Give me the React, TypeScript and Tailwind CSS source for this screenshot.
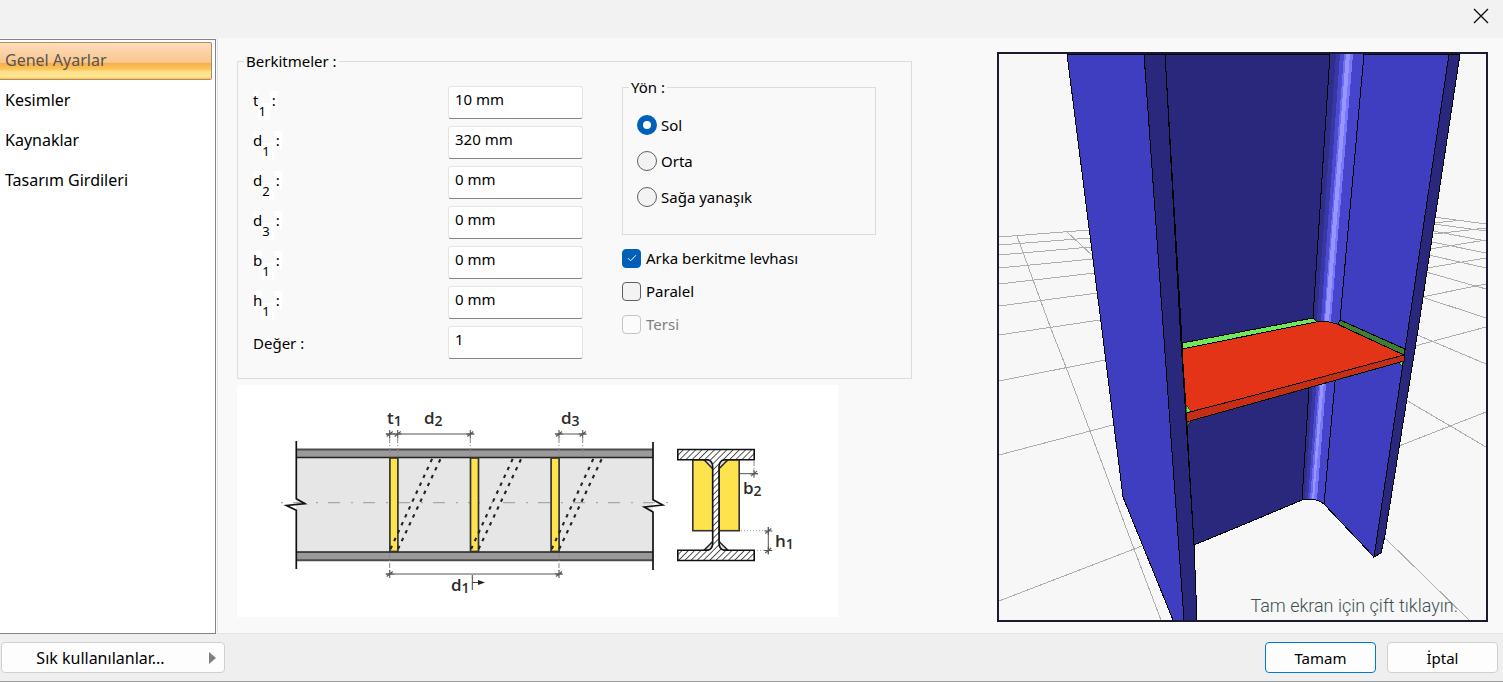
import { useState } from "react";
import type { ReactNode } from "react";

const sections = ["Genel Ayarlar", "Kesimler", "Kaynaklar", "Tasarım Girdileri"];

const fields = [
    { id: "t1", symbol: "t", index: "1", value: "10 mm" },
    { id: "d1", symbol: "d", index: "1", value: "320 mm" },
    { id: "d2", symbol: "d", index: "2", value: "0 mm" },
    { id: "d3", symbol: "d", index: "3", value: "0 mm" },
    { id: "b1", symbol: "b", index: "1", value: "0 mm" },
    { id: "h1", symbol: "h", index: "1", value: "0 mm" },
];

const directions = ["Sol", "Orta", "Sağa yanaşık"];

const inputClass =
    "h-[33px] w-[135px] rounded-[3px] border border-[#e5e5e5] border-b-[#868686] bg-white px-1.5 pb-2 text-[15px] outline-none";

function CheckOption({ label, defaultChecked, disabled }: { label: string; defaultChecked?: boolean; disabled?: boolean }) {
    return (
        <label className={disabled ? "flex items-center gap-[5px] text-[#808080]" : "flex items-center gap-[5px]"}>
            <span className="grid size-[19px] place-items-center">
                <input
                    type="checkbox"
                    defaultChecked={defaultChecked}
                    disabled={disabled}
                    className="peer col-start-1 row-start-1 size-[19px] appearance-none rounded border border-[#5f5f5f] bg-[#f3f3f3] checked:border-[#005fb8] checked:bg-[#005fb8] disabled:border-[#c4c4c4] disabled:bg-[#fbfbfb]"
                />
                <svg viewBox="0 0 10 8" className="pointer-events-none col-start-1 row-start-1 hidden h-2 w-2.5 peer-checked:block">
                    <path d="M1 4.2 3.6 6.8 9 1.2" fill="none" stroke="#fff" />
                </svg>
            </span>
            {label}
        </label>
    );
}

function Tick({ x, y }: { x: number; y: number }) {
    return <path d={`M${x} ${y - 4}v8M${x - 3} ${y + 2.5}l6-5M${x - 4} ${y}h8`} stroke="#555" strokeWidth="1.1" />;
}

function Dim({ x, y, name, index }: { x: number; y: number; name: string; index: string }) {
    return (
        <text x={x} y={y} fontSize="17" fontWeight="600" fill="#2c2c2c">
            {name}
            <tspan fontSize="14" dy="2">{index}</tspan>
        </text>
    );
}

function StiffenerDiagram() {
    return (
        <svg viewBox="237 385 601 232" className="block w-[601px] max-w-full bg-white" fill="none" role="img" aria-label="Berkitme şeması">
            <defs>
                <pattern id="hatch" width="4.4" height="4.4" patternUnits="userSpaceOnUse" patternTransform="rotate(45)">
                    <rect width="4.4" height="4.4" fill="#fff" />
                    <path d="M0 0V4.4" stroke="#444" strokeWidth="1.8" />
                </pattern>
            </defs>

            {/* beam side view */}
            <rect x="296" y="458" width="357" height="94" fill="#e6e6e6" />
            <rect x="296" y="449" width="357" height="9" fill="#9a9a9a" />
            <rect x="296" y="552" width="357" height="9" fill="#9a9a9a" />
            <path d="M296 449.5H653M296 560.3H653" stroke="#4c4c4c" strokeWidth="2" />
            <path d="M296 457.6H653M296 552H653" stroke="#222" strokeWidth="1.5" />
            <path d="M281 502.7H669" stroke="#999" strokeDasharray="2 10 12 11" />
            {[0, 80.6, 161.2].map((dx) => (
                <g key={dx} transform={`translate(${dx} 0)`}>
                    <rect x="389.9" y="458" width="8" height="93.5" fill="#ffe34d" stroke="#333" strokeWidth="1.7" />
                    <path d="M390.5 549 432.5 458M398 549 440.5 459" stroke="#222" strokeWidth="2.1" strokeDasharray="3.5 5.2" />
                </g>
            ))}
            <path d="M296.3 441V498.7L305 503.7 286.5 505.5 296.3 510.3V569" stroke="#111" strokeWidth="1.7" />
            <path d="M653 442V499.7L662.7 505 644.3 507 653 512V570" stroke="#111" strokeWidth="1.7" />

            {/* dimensions */}
            <path d="M386 434H474M555 434H586M386 574H562M739 473.7H758M768.3 527V554" stroke="#555" />
            <path d="M389.7 438V458M397.7 438V458M470.3 438V458M559 438V458M582.7 438V458M389.7 553V571M559 553V571M754 461V472" stroke="#888" strokeDasharray="5 2 1 2" />
            <path d="M741 530.7H766M757 550.3H766" stroke="#999" strokeDasharray="1 2" />
            <Tick x={389.7} y={434} />
            <Tick x={397.7} y={434} />
            <Tick x={470.3} y={434} />
            <Tick x={559} y={434} />
            <Tick x={582.7} y={434} />
            <Tick x={389.7} y={574} />
            <Tick x={559} y={574} />
            <Tick x={754} y={473.7} />
            <Tick x={768.3} y={531} />
            <Tick x={768.3} y={550.5} />
            <path d="M472.3 575V590M472.3 582.5H480" stroke="#444" />
            <path d="M478 580 485 582.5 478 585Z" fill="#222" />
            <g fontFamily="'Open Sans', 'Noto Sans', sans-serif">
                <Dim x={387} y={424} name="t" index="1" />
                <Dim x={424} y={424} name="d" index="2" />
                <Dim x={561} y={424} name="d" index="3" />
                <Dim x={451} y={591} name="d" index="1" />
                <Dim x={743} y={494} name="b" index="2" />
                <Dim x={775} y={547} name="h" index="1" />
            </g>

            {/* cross-section */}
            <rect x="692.8" y="459.7" width="46.4" height="71" fill="#ffe34d" stroke="#333" strokeWidth="1.6" />
            <path d="M704 459.7H728L719 468.7V541.5L728 550.3H704L712.7 541.5V468.7Z" fill="#ddd" stroke="#222" strokeWidth="1.5" />
            <path
                d="M677.8 449.5H754.2V459.7H724Q719 461 719 467V543Q719 549 724 550.3H754.2V560.5H677.8V550.3H708Q712.7 549 712.7 543V467Q712.7 461 708 459.7H677.8Z"
                fill="url(#hatch)"
                stroke="#111"
                strokeWidth="1.6"
            />
        </svg>
    );
}

function ModelView() {
    return (
        <svg viewBox="999 54 487 566" className="block w-full bg-[#f7f7f7]" fill="none" shapeRendering="crispEdges" role="img" aria-label="3B model">
            {/* ground grid */}
            <path
                d="M999 237 1089 230M999 245 1090 238M999 255 1091 247M999 268 1093 259M999 284 1095 273M999 306 1098 293M999 335 1100 320M999 381 1105 360M999 455 1113 425M999 601 1142 546M1017 236 1051 329 1066 367 1090 431 1134 549 1161 620M1067 232 1093 256"
                stroke="#acaeac"
            />
            <path
                d="M1434 217 1486 224M1434 224 1486 231M1434 223 1462 220M1433 231 1486 241M1434 234 1486 228M1432 242 1486 253M1430 249 1486 240M1429 255 1486 268M1427 268 1486 258M1426 272 1486 289M1422 297 1486 284M1422 297 1486 318M1415 346 1486 327M1415 334 1486 364M1406 400 1486 447M1399 446 1486 412M1385 538 1469 620"
                stroke="#acaeac"
            />

            {/* column */}
            <path d="M1067 54H1144L1163 325 1184 620H1173L1123 497 1102 330Z" fill="#3f3ec0" stroke="#000" />
            <path d="M1165 54H1330L1313 318 1309 388 1302 500 1240 526 1194 545Z" fill="#29287c" stroke="#000" />
            <path d="M1144 54H1165L1180 325 1194 545 1197 620H1184L1163 325Z" fill="#29287c" stroke="#000" />
            <path d="M1364 54H1449L1408 330 1374 557 1324 504 1335 382 1340 320Z" fill="#3f3ec0" stroke="#000" />
            <path d="M1449 54H1460L1418 330 1385 535 1381 553 1374 557 1408 330Z" fill="#29287c" stroke="#000" />

            {/* rounded root between web and flange */}
            <path d="M1330 54H1364L1340 320 1335 382 1324 504Q1318 499 1309 499L1302 500 1313 318Z" fill="#4544cb" />
            <path d="M1330 54H1337L1318 320 1306 500H1302L1313 318Z" fill="#2f2e8b" />
            <path d="M1336 54H1340L1321 320 1308 500H1305L1317 320Z" fill="#3837a6" />
            <path d="M1340 54H1344L1324 320 1311 500H1308L1321 320Z" fill="#4b4ad0" />
            <path d="M1344 54H1347L1326 320 1313 500H1310L1324 320Z" fill="#6f6df3" />
            <path d="M1346 54H1351L1329 320 1315 500H1312L1325 320Z" fill="#9795ff" />
            <path d="M1350 54H1353L1331 320 1317 500H1314L1329 320Z" fill="#7876fb" />
            <path d="M1330 54 1313 318 1309 388 1302 500M1364 54 1340 320 1335 382 1324 504Q1318 499 1309 499L1302 500" stroke="#000" />

            {/* stiffener plate and welds */}
            <path d="M1182 343 1240 332 1313 318 1317 322 1182 349Z" fill="#6fe85a" stroke="#000" />
            <path d="M1340 320 1405 349 1404 355H1400L1338 324Z" fill="#3f8030" stroke="#000" />
            <path d="M1182 349 1316 322Q1325 320 1337 324L1404 355 1240 399 1190 412 1186 407Z" fill="#e33417" stroke="#000" />
            <path d="M1404 355V361L1240 407 1186 422V413L1240 399Z" fill="#c42d16" stroke="#000" />
            <path d="M1186 405 1191 411 1186 413Z" fill="#6fe85a" stroke="#000" strokeWidth="0.5" />
            <path d="M1187 422 1191 421 1187 427Z" fill="#3f8030" stroke="#000" strokeWidth="0.5" />
            <path d="M1399 363 1403 361 1402 366Z" fill="#6fe85a" stroke="#000" strokeWidth="0.5" />
        </svg>
    );
}

function FieldRow({ id, value, children }: { id: string; value: string; children: ReactNode }) {
    return (
        <div className="flex h-[33px] items-center">
            <label htmlFor={id} className="flex w-[195px] items-start">
                {children}
            </label>
            <input id={id} defaultValue={value} className={inputClass} />
        </div>
    );
}

export default function App() {
    const [active, setActive] = useState(0);

    return (
        <div className="flex min-h-screen flex-col bg-[#efefef] font-['Noto_Sans',sans-serif] text-[15px] leading-5 text-black">
            <header className="flex h-[38px] items-center justify-end bg-[#f2f2f2] px-3.5">
                <button aria-label="Kapat" className="-mt-1.5 size-4">
                    <svg viewBox="0 0 16 16" className="size-4" fill="none" stroke="#111" strokeWidth="1.4">
                        <path d="m1 1 14 14M15 1 1 15" />
                    </svg>
                </button>
            </header>

            <div className="flex flex-1 bg-[#f9f9f9]">
                <nav className="mt-px mr-px flex w-[216px] shrink-0 flex-col gap-0.5 border-t border-r border-b border-[#828290] bg-white pt-0.5 pr-[3px] text-[16px]">
                    {sections.map((name, i) => (
                        <button
                            key={name}
                            onClick={() => setActive(i)}
                            className={
                                i === active
                                    ? "h-[38px] rounded-r-xs border border-l-0 border-[#b08d63] bg-[linear-gradient(#fbdcbc,#fbc68d_54%,#f9ab4a_56%,#fbc458_72%,#fde18a_80%,#fde693_94%,#fbc04a)] pb-0.5 pl-[5px] text-left text-[#555]"
                                    : "h-[38px] pb-0.5 pl-[5px] text-left"
                            }
                        >
                            {name}
                        </button>
                    ))}
                </nav>

                <main className="flex flex-1 items-start border-b border-l border-[#e3e3e3] pt-[13px] pr-[15px] pb-[11px] pl-[19px]">
                    <div className="mr-[85px] flex-1">
                        <fieldset className="border border-[#dcdcdc] pb-[19px] pl-[15px]">
                            <legend className="-ml-[9px] px-0.5">Berkitmeler :</legend>
                            <div className="flex items-start">
                                <div className="flex w-[369px] flex-col gap-[7px] pt-[15px]">
                                    {fields.map((f) => (
                                        <FieldRow key={f.id} id={f.id} value={f.value}>
                                            <span className="mt-1.5 bg-white leading-[19px]">{f.symbol}</span>
                                            <sub className="bottom-0 mt-[18px] bg-white pr-1 text-[13px] leading-[17px]">{f.index}</sub>
                                            <span className="mt-1.5 bg-white px-0.5 leading-[19px]">:</span>
                                        </FieldRow>
                                    ))}
                                    <FieldRow id="count" value="1">
                                        Değer :
                                    </FieldRow>
                                </div>

                                <div className="flex w-[254px] flex-col gap-[13px] pt-1.5">
                                    <fieldset className="border border-[#dcdcdc] pb-[27px] pl-3.5">
                                        <legend className="-ml-2 px-0.5">Yön :</legend>
                                        <div className="flex flex-col gap-4 pt-[18px]">
                                            {directions.map((d, i) => (
                                                <label key={d} className="flex items-center gap-1">
                                                    <input
                                                        type="radio"
                                                        name="direction"
                                                        defaultChecked={i === 0}
                                                        className="size-5 appearance-none rounded-full border border-[#5f5f5f] bg-[#f3f3f3] checked:border-[6px] checked:border-[#005fb8] checked:bg-white"
                                                    />
                                                    {d}
                                                </label>
                                            ))}
                                        </div>
                                    </fieldset>
                                    <CheckOption label="Arka berkitme levhası" defaultChecked />
                                    <CheckOption label="Paralel" />
                                    <CheckOption label="Tersi" disabled />
                                </div>
                            </div>
                        </fieldset>
                        <div className="mt-1.5">
                            <StiffenerDiagram />
                        </div>
                    </div>

                    <div className="relative mt-px w-[491px] shrink-0 border-2 border-[#1b1b30]">
                        <ModelView />
                        <p className="absolute right-7 bottom-1 font-['Roboto',sans-serif] text-[18px] leading-5 font-light text-[#3c5050]">
                            Tam ekran için çift tıklayın.
                        </p>
                    </div>
                </main>
            </div>

            <footer className="flex h-12 items-start justify-between border-b border-[#a0a0a0] pt-2 pr-[5px] pl-px">
                <button className="flex h-[31px] w-56 items-center rounded border border-[#d0d0d0] bg-[#fdfdfd] pr-2">
                    <span className="flex-1 pr-2.5 text-[16px]">Sık kullanılanlar...</span>
                    <svg viewBox="0 0 7 12" className="h-3 w-[7px]">
                        <path d="M0 0 7 6 0 12Z" fill="#808080" />
                    </svg>
                </button>
                <div className="flex gap-[11px]">
                    <button className="h-[31px] w-[111px] rounded border border-[#0078d4] bg-[#fdfdfd]">Tamam</button>
                    <button className="h-[31px] w-[111px] rounded border border-[#d0d0d0] bg-[#fdfdfd]">İptal</button>
                </div>
            </footer>
        </div>
    );
}
